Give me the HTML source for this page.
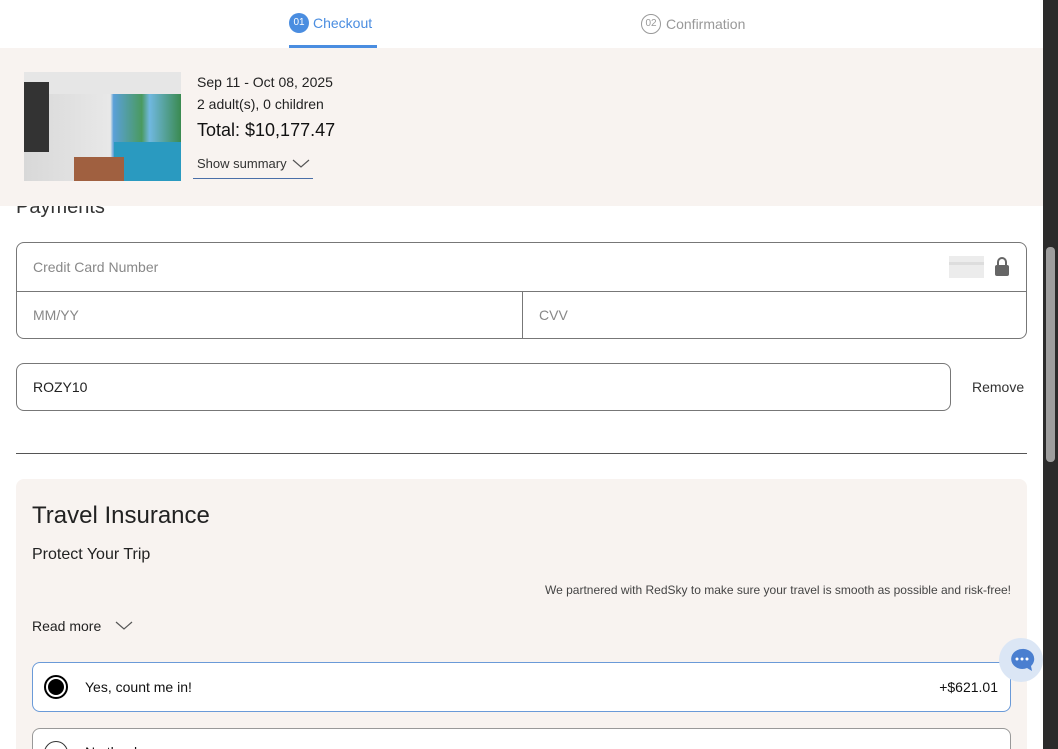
<!DOCTYPE html>
<html style="overflow:hidden;height:749px"><head><meta charset="utf-8"><style>
*{box-sizing:border-box;margin:0;padding:0}
body{width:1058px;height:749px;overflow:hidden;background:#fff;font-family:"Liberation Sans",sans-serif;color:#222;position:relative}
.abs{position:absolute}
.sb{left:1043px;top:0;width:15px;height:749px;background:#2b2b2b}
.thumb{left:1046px;top:247px;width:9px;height:215px;background:#9e9e9e;border-radius:4px}
.tabs{left:0;top:0;width:1043px;height:48px;background:#fff}
.band{left:0;top:48px;width:1043px;height:158px;background:#f8f3f0}
.field{border:1px solid #777;}
.ph{color:#888;font-size:14px}
</style></head><body>
<div class="abs tabs">
  <div class="abs" style="left:289px;top:13px;width:20px;height:20px;border-radius:50%;background:#4a8de0;color:#fff;font-size:10px;text-align:center;line-height:20px">01</div>
  <div class="abs" style="left:313px;top:15px;font-size:14px;color:#4a8de0">Checkout</div>
  <div class="abs" style="left:289px;top:45px;width:88px;height:3px;background:#4a8de0"></div>
  <div class="abs" style="left:641px;top:14px;width:20px;height:20px;border-radius:50%;border:1px solid #999;color:#999;font-size:10px;text-align:center;line-height:18px">02</div>
  <div class="abs" style="left:666px;top:16px;font-size:14px;color:#999">Confirmation</div>
</div>
<div class="abs" style="left:16px;top:196px;font-size:20px;color:#333">Payments</div>
<div class="abs band">
  <div class="abs" style="left:24px;top:24px;width:157px;height:109px;overflow:hidden;background:linear-gradient(90deg,#d8d8d8 0,#e8e8e8 55%,#5aa0d8 57%,#4a9a60 75%,#70b8e0 80%,#3a8a50 100%)">
    <div class="abs" style="left:0;top:0;width:157px;height:22px;background:#e6e6e6"></div>
    <div class="abs" style="left:0;top:10px;width:25px;height:70px;background:#333"></div>
    <div class="abs" style="left:90px;top:70px;width:67px;height:39px;background:#2a9ac0"></div>
    <div class="abs" style="left:50px;top:85px;width:50px;height:24px;background:#a06040"></div>
  </div>
  <div class="abs" style="left:197px;top:26px;font-size:14px;color:#222">Sep 11 - Oct 08, 2025</div>
  <div class="abs" style="left:197px;top:48px;font-size:14px;color:#222">2 adult(s), 0 children</div>
  <div class="abs" style="left:197px;top:72px;font-size:18px;color:#111">Total: $10,177.47</div>
  <div class="abs" style="left:197px;top:108px;font-size:13px;color:#333">Show summary</div>
  <svg class="abs" style="left:292px;top:111px" width="18" height="10"><path d="M1 1 L9 8 L17 1" fill="none" stroke="#555" stroke-width="1.2"/></svg>
  <div class="abs" style="left:193px;top:130px;width:120px;height:1px;background:#4a6fa8"></div>
</div>
<div class="abs field" style="left:16px;top:242px;width:1011px;height:97px;border-radius:8px"></div>
<div class="abs" style="left:16px;top:291px;width:1011px;height:1px;background:#777"></div>
<div class="abs" style="left:522px;top:291px;width:1px;height:48px;background:#777"></div>
<div class="abs ph" style="left:33px;top:259px">Credit Card Number</div>
<div class="abs" style="left:949px;top:256px;width:35px;height:22px;background:#ececec"><div style="margin-top:6px;height:3px;background:#ddd"></div></div>
<svg class="abs" style="left:994px;top:256px" width="16" height="21"><path d="M4 9 V6 a4 4 0 0 1 8 0 V9" fill="none" stroke="#666" stroke-width="2"/><rect x="1" y="9" width="14" height="11" rx="2" fill="#666"/></svg>
<div class="abs ph" style="left:33px;top:307px">MM/YY</div>
<div class="abs ph" style="left:539px;top:307px">CVV</div>
<div class="abs field" style="left:16px;top:363px;width:935px;height:48px;border-radius:8px"></div>
<div class="abs" style="left:33px;top:379px;font-size:14px;color:#222">ROZY10</div>
<div class="abs" style="left:972px;top:379px;font-size:14px;color:#333">Remove</div>
<div class="abs" style="left:16px;top:453px;width:1011px;height:1px;background:#555"></div>
<div class="abs" style="left:16px;top:479px;width:1011px;height:270px;background:#f8f3f0;border-radius:8px 8px 0 0"></div>
<div class="abs" style="left:32px;top:502px;font-size:24px;color:#222">Travel Insurance</div>
<div class="abs" style="left:32px;top:546px;font-size:16px;color:#222">Protect Your Trip</div>
<div class="abs" style="left:0;top:583px;width:1011px;text-align:right;font-size:12px;color:#444">We partnered with RedSky to make sure your travel is smooth as possible and risk-free!</div>
<div class="abs" style="left:32px;top:618px;font-size:14px;color:#222">Read more</div>
<svg class="abs" style="left:115px;top:621px" width="18" height="10"><path d="M1 1 L9 8 L17 1" fill="none" stroke="#555" stroke-width="1.2"/></svg>
<div class="abs" style="left:32px;top:662px;width:979px;height:50px;background:#fff;border:1px solid #6a9ad8;border-radius:8px"></div>
<div class="abs" style="left:44px;top:675px;width:24px;height:24px;border-radius:50%;border:2px solid #000;background:#fff"><div style="margin:2px;width:16px;height:16px;border-radius:50%;background:#000"></div></div>
<div class="abs" style="left:85px;top:679px;font-size:14px;color:#111">Yes, count me in!</div>
<div class="abs" style="left:0;top:679px;width:998px;text-align:right;font-size:14px;color:#111">+$621.01</div>
<div class="abs" style="left:32px;top:728px;width:979px;height:40px;background:#fff;border:1px solid #999;border-radius:8px"></div>
<div class="abs" style="left:44px;top:741px;width:24px;height:24px;border-radius:50%;border:1.5px solid #333;background:#fff"></div>
<div class="abs" style="left:85px;top:744px;font-size:14px;color:#111">No thanks</div>
<div class="abs" style="left:999px;top:638px;width:44px;height:44px;border-radius:50%;background:#dbe6f5"></div>
<svg class="abs" style="left:1009px;top:647px" width="26" height="26"><path d="M13 2 a11 10 0 1 0 5 19 l5 3 -1 -5 a11 10 0 0 0 -9 -17z" fill="#4a7fd0"/><circle cx="8" cy="12" r="1.5" fill="#fff"/><circle cx="13" cy="12" r="1.5" fill="#fff"/><circle cx="18" cy="12" r="1.5" fill="#fff"/></svg>
<div class="abs sb"></div>
<div class="abs thumb"></div>
</body></html>
